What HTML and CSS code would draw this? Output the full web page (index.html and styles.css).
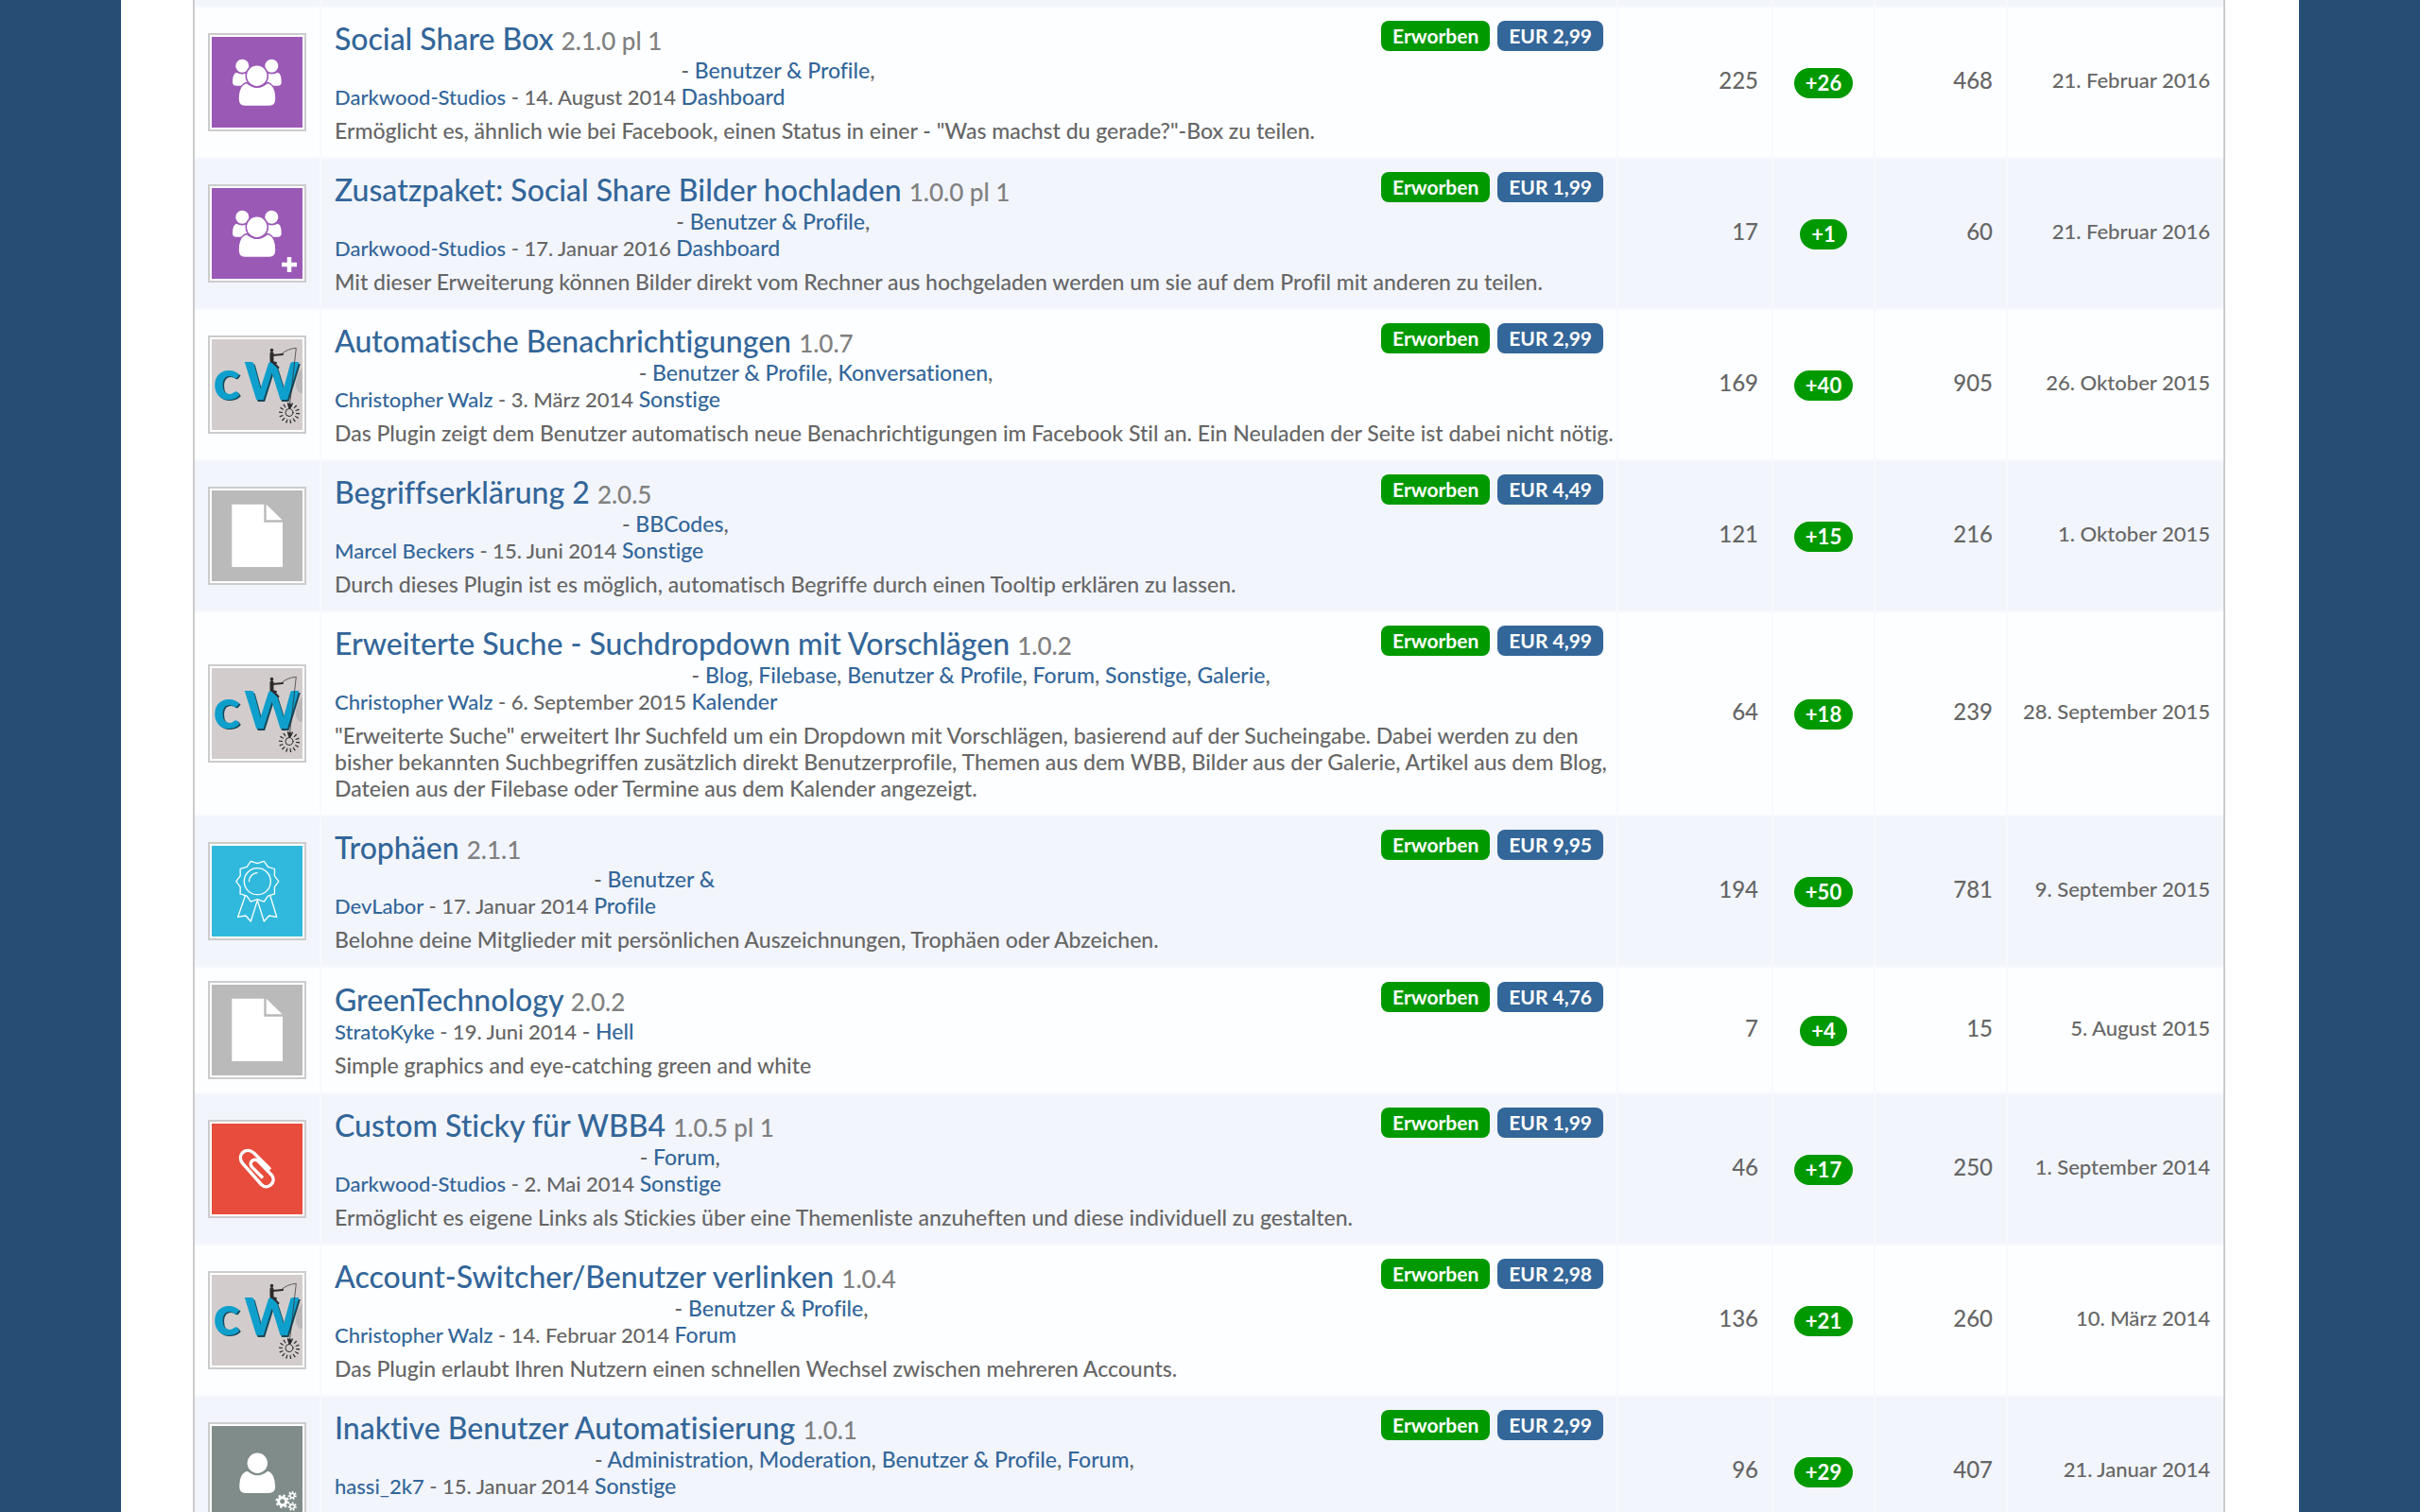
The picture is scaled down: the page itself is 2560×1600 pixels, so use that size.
FILE: index.html
```html
<!DOCTYPE html>
<html lang="de">
<head>
    <meta charset="UTF-8" />
    <meta name="viewport" content="width=device-width, initial-scale=1" />
    <title>Erworbene Plugins</title>
    <link rel="stylesheet" href="styles.css">
</head>
<body>

    <!-- icon set -->
    <svg class="icon-set" aria-hidden="true">
        <symbol id="icon-users" viewBox="0 0 96 96">
            <rect width="96" height="96" fill="#9b59b6" />
            <g fill="#fff">
                <circle cx="32.3" cy="30.7" r="7" />
                <circle cx="63.3" cy="30.7" r="7" />
                <path d="M26 37.7Q32.300 41 38 38V51.700H26Q22 51.700 22 48Q22 39 26 37.700Z" />
                <path d="M70 37.700Q63.300 41 58 38V51.700H70Q73.700 51.700 73.700 48Q73.700 39 70 37.700Z" />
            </g>
            <g fill="#fff" stroke="#9b59b6" stroke-width="1.600">
                <path d="M37 48.500C31 50 28 57 28 65.500Q28 73.500 35 73.500H61Q68 73.500 68 65.500C68 57 65 50 59 48.500Q48 58 37 48.500Z" />
                <circle cx="47.800" cy="41.300" r="11.500" />
            </g>
        </symbol>
        <symbol id="icon-plus" viewBox="0 0 96 96">
            <path d="M82 73V89M74 81H90" stroke="#fff" stroke-width="4.500" />
        </symbol>
        <symbol id="icon-file" viewBox="0 0 96 96">
            <rect width="96" height="96" fill="#bababa" />
            <path d="M21.300 14.700H55.300V33.700H75V81H21.300Z" fill="#fff" />
            <path d="M57.700 14.700L74.500 31.300H57.700Z" fill="#fff" />
        </symbol>
        <symbol id="icon-ribbon" viewBox="0 0 96 96">
            <rect width="96" height="96" fill="#30b9dc" />
            <g fill="none" stroke="#fff" stroke-width="1.300" stroke-linejoin="round" stroke-linecap="round">
                <path d="M70.800 37.700L66.400 43.600L66.500 50.900L59.500 53.100L55.300 59.100L48.300 56.700L41.300 59.100L37.100 53.100L30.100 50.900L30.200 43.600L25.800 37.700L30.200 31.800L30.100 24.500L37.100 22.300L41.300 16.300L48.300 18.700L55.300 16.300L59.500 22.300L66.500 24.500L66.400 31.800Z" />
                <circle cx="48.300" cy="37.700" r="14" />
                <path d="M39.500 37.700A9 9 0 0 1 48 28.700" />
                <path d="M35.300 53.300L27.700 75.300L36 74L41.300 80L48.300 57.700L55.300 80L60.700 74L68.700 75.300L62 53.300" />
            </g>
        </symbol>
        <symbol id="icon-clip" viewBox="0 0 96 96">
            <rect width="96" height="96" fill="#e74c3c" />
            <path d="M62 48.500L44.500 31C36 24 26 33 32.500 42L52.500 64.500C59 71 69 62 63.500 54.500L49 39.500C44 36 39 41 42.500 46L54 57.500" fill="none" stroke="#fff" stroke-width="3.400" />
        </symbol>
        <symbol id="icon-user" viewBox="0 0 96 96">
            <rect width="96" height="96" fill="#7f8c8a" />
            <g fill="#fff" stroke="#7f8c8a" stroke-width="1.600">
                <path d="M38 47C31 48 28.500 56 28.500 64.500Q28.500 71.700 36 71.700H60Q68 71.700 68 64.500C68 56 65 48 59 47Q48.300 56 38 47Z" />
                <circle cx="48.300" cy="39.300" r="11.500" />
            </g>
            <g fill="none" stroke="#fff">
                <circle cx="74.700" cy="79.700" r="4" stroke-width="3" />
                <circle cx="74.700" cy="79.700" r="6" stroke-width="2.500" stroke-dasharray="2.350" />
                <circle cx="85.200" cy="73.500" r="2.300" stroke-width="1.500" />
                <circle cx="85.200" cy="73.500" r="3.700" stroke-width="1.800" stroke-dasharray="1.660" />
                <circle cx="85.200" cy="85.200" r="2.300" stroke-width="1.500" />
                <circle cx="85.200" cy="85.200" r="3.700" stroke-width="1.800" stroke-dasharray="1.660" />
            </g>
        </symbol>
        <symbol id="icon-cw" viewBox="0 0 96 96">
            <rect width="96" height="96" fill="#d2cdcc" />
            <path d="M96 30Q88 38 89 50Q91 58 96 57Z" fill="#bcb8b9" />
            <g font-family="Lato, sans-serif" font-weight="900">
                <g fill="#17485a">
                    <text x="3" y="65" font-size="59">c</text>
                    <text x="36" y="66" font-size="55">W</text>
                </g>
                <g fill="#0f9fcc">
                    <text x="1.500" y="63.500" font-size="59">c</text>
                    <text x="34.500" y="64" font-size="55">W</text>
                </g>
            </g>
            <g fill="none" stroke="#2d2b2c" stroke-linecap="round">
                <circle cx="63.500" cy="11.500" r="1.800" fill="#2d2b2c" stroke="none" />
                <path d="M63.500 15V23" stroke-width="4" />
                <path d="M64 17L75 16M64 24L70.500 30M64 24L68 25" stroke-width="2" />
                <path d="M74 15.500Q80 10 89.300 9.300L82.700 68" stroke-width="0.700" />
                <path d="M82.500 69V72" stroke-width="3" />
                <circle cx="82" cy="77.500" r="4" stroke-width="1" />
                <circle cx="82" cy="78" r="9" stroke-width="4" stroke-linecap="butt" stroke-dasharray="1.200 2.834" />
            </g>
        </symbol>
    </svg>

    <main class="page">
        <table class="plugin-table">
            <colgroup>
                <col class="col-icon" />
                <col class="col-title" />
                <col class="col-purchases" />
                <col class="col-rating" />
                <col class="col-downloads" />
                <col class="col-date" />
            </colgroup>
            <tbody id="plugin-list">
                <tr class="row-tail"><td></td><td></td><td></td><td></td><td></td><td></td></tr>
            </tbody>
        </table>
    </main>

    <script src="plugins.js"></script>

</body>
</html>
```
FILE: styles.css
```css
body {
    margin: 0;
    height: 100vh;
    overflow: hidden;
    background-color: #264d73;
    color: #666;
    font-family: Lato, sans-serif;
    font-size: 23px;
    font-weight: 500;
    font-variant-ligatures: none;
    line-height: 28px;
}
a {
    color: #369;
    text-decoration: none;
}
a:hover {
    text-decoration: underline;
}
.icon-set {
    display: none;
}
.page {
    margin: 0 5%;
    padding: 0 78px 0 76px;
    background-color: #fff;
}
.plugin-table {
    width: 100%;
    table-layout: fixed;
    border-collapse: separate;
    border-spacing: 0;
    border-left: 2px solid #ccc;
    border-right: 2px solid #ccc;
}
.col-icon {
    width: 132px;
}
.col-purchases {
    width: 164px;
}
.col-rating {
    width: 108px;
}
.col-downloads {
    width: 140px;
}
.col-date {
    width: 230px;
}
td {
    padding: 14px;
    border-left: 2px solid #f7f9fe;
    border-bottom: 2px solid #f7f9fe;
    background-color: #fdfeff;
    vertical-align: middle;
}
td:first-child {
    border-left: none;
}
tr:nth-child(odd) td {
    background-color: #f2f5fc;
}
.row-tail td {
    height: 6px;
    padding: 0;
}
.thumb {
    display: block;
    box-sizing: border-box;
    width: 104px;
    height: 104px;
    padding: 2px;
    border: 2px solid #ccc;
    background-color: #fff;
}
td.title {
    padding-right: 0;
}
.title h3 {
    margin: 0;
    font-size: 32px;
    font-weight: 500;
    line-height: 38px;
}
.version {
    color: #808080;
    font-size: 26px;
    line-height: 1;
}
.meta, .description {
    margin: 0;
}
.meta {
    font-size: 22px;
}
.description {
    margin-top: 7px;
}
.categories {
    display: inline-block;
    font-size: 23px;
}
.labels {
    float: right;
    display: flex;
    gap: 8px;
    margin-right: 14px;
}
.label {
    padding: 0 12px;
    border-radius: 8px;
    background-color: #369;
    color: #fff;
    font-size: 21px;
    font-weight: bold;
    line-height: 32px;
}
.label.bought, .rating-badge {
    background-color: #090;
}
.rating {
    text-align: center;
}
.rating-badge {
    display: inline-block;
    padding: 0 12px;
    border-radius: 16px;
    color: #fff;
    font-size: 22px;
    font-weight: bold;
    line-height: 32px;
    vertical-align: middle;
}
.number, .date {
    padding-bottom: 18px;
    text-align: right;
    white-space: nowrap;
}
.number {
    font-size: 24px;
}
.date {
    font-size: 22px;
}
```
FILE: plugins.js
```javascript
// categories: one array per line
const plugins = [
    { icon: 'users', title: 'Social Share Box', version: '2.1.0 pl 1', author: 'Darkwood-Studios', created: '14. August 2014', categories: [['Benutzer & Profile'], ['Dashboard']], text: 'Ermöglicht es, ähnlich wie bei Facebook, einen Status in einer - "Was machst du gerade?"-Box zu teilen.', price: '2,99', purchases: 225, rating: 26, downloads: 468, updated: '21. Februar 2016' },
    { icon: 'users', extra: 'plus', title: 'Zusatzpaket: Social Share Bilder hochladen', version: '1.0.0 pl 1', author: 'Darkwood-Studios', created: '17. Januar 2016', categories: [['Benutzer & Profile'], ['Dashboard']], text: 'Mit dieser Erweiterung können Bilder direkt vom Rechner aus hochgeladen werden um sie auf dem Profil mit anderen zu teilen.', price: '1,99', purchases: 17, rating: 1, downloads: 60, updated: '21. Februar 2016' },
    { icon: 'cw', title: 'Automatische Benachrichtigungen', version: '1.0.7', author: 'Christopher Walz', created: '3. März 2014', categories: [['Benutzer & Profile', 'Konversationen'], ['Sonstige']], text: 'Das Plugin zeigt dem Benutzer automatisch neue Benachrichtigungen im Facebook Stil an. Ein Neuladen der Seite ist dabei nicht nötig.', price: '2,99', purchases: 169, rating: 40, downloads: 905, updated: '26. Oktober 2015' },
    { icon: 'file', title: 'Begriffserklärung 2', version: '2.0.5', author: 'Marcel Beckers', created: '15. Juni 2014', categories: [['BBCodes'], ['Sonstige']], text: 'Durch dieses Plugin ist es möglich, automatisch Begriffe durch einen Tooltip erklären zu lassen.', price: '4,49', purchases: 121, rating: 15, downloads: 216, updated: '1. Oktober 2015' },
    { icon: 'cw', title: 'Erweiterte Suche - Suchdropdown mit Vorschlägen', version: '1.0.2', author: 'Christopher Walz', created: '6. September 2015', categories: [['Blog', 'Filebase', 'Benutzer & Profile', 'Forum', 'Sonstige', 'Galerie'], ['Kalender']], text: '"Erweiterte Suche" erweitert Ihr Suchfeld um ein Dropdown mit Vorschlägen, basierend auf der Sucheingabe. Dabei werden zu den bisher bekannten Suchbegriffen zusätzlich direkt Benutzerprofile, Themen aus dem WBB, Bilder aus der Galerie, Artikel aus dem Blog, Dateien aus der Filebase oder Termine aus dem Kalender angezeigt.', price: '4,99', purchases: 64, rating: 18, downloads: 239, updated: '28. September 2015' },
    { icon: 'ribbon', title: 'Trophäen', version: '2.1.1', author: 'DevLabor', created: '17. Januar 2014', categories: [['Benutzer &<br>Profile']], text: 'Belohne deine Mitglieder mit persönlichen Auszeichnungen, Trophäen oder Abzeichen.', price: '9,95', purchases: 194, rating: 50, downloads: 781, updated: '9. September 2015' },
    { icon: 'file', title: 'GreenTechnology', version: '2.0.2', author: 'StratoKyke', created: '19. Juni 2014', categories: [['Hell']], text: 'Simple graphics and eye-catching green and white', price: '4,76', purchases: 7, rating: 4, downloads: 15, updated: '5. August 2015' },
    { icon: 'clip', title: 'Custom Sticky für WBB4', version: '1.0.5 pl 1', author: 'Darkwood-Studios', created: '2. Mai 2014', categories: [['Forum'], ['Sonstige']], text: 'Ermöglicht es eigene Links als Stickies über eine Themenliste anzuheften und diese individuell zu gestalten.', price: '1,99', purchases: 46, rating: 17, downloads: 250, updated: '1. September 2014' },
    { icon: 'cw', title: 'Account-Switcher/Benutzer verlinken', version: '1.0.4', author: 'Christopher Walz', created: '14. Februar 2014', categories: [['Benutzer & Profile'], ['Forum']], text: 'Das Plugin erlaubt Ihren Nutzern einen schnellen Wechsel zwischen mehreren Accounts.', price: '2,98', purchases: 136, rating: 21, downloads: 260, updated: '10. März 2014' },
    { icon: 'user', title: 'Inaktive Benutzer Automatisierung', version: '1.0.1', author: 'hassi_2k7', created: '15. Januar 2014', categories: [['Administration', 'Moderation', 'Benutzer & Profile', 'Forum'], ['Sonstige']], text: 'Versendet automatisch nach einer bestimmten Zeit der Inaktivität eine E-Mail an Benutzer und löscht diese bei Bedarf.', price: '2,99', purchases: 96, rating: 29, downloads: 407, updated: '21. Januar 2014' }
];

function link(text) {
    return `<a href="#">${text.replace('& ', '&amp; ')}</a>`;
}

const list = document.getElementById('plugin-list');

plugins.forEach(p => {
    const categories = p.categories.map(line => line.map(link).join(', ')).join(',<br>');
    const extra = p.extra ? `<use href="#icon-${p.extra}" />` : '';
    const row = document.createElement('tr');
    row.innerHTML = `
        <td><svg class="thumb" viewBox="0 0 96 96" aria-hidden="true"><use href="#icon-${p.icon}" />${extra}</svg></td>
        <td class="title">
            <div class="labels"><span class="label bought">Erworben</span><span class="label">EUR ${p.price}</span></div>
            <h3>${link(p.title)} <span class="version">${p.version}</span></h3>
            <p class="meta">${link(p.author)} - ${p.created} <span class="categories">- ${categories}</span></p>
            <p class="description">${p.text}</p>
        </td>
        <td class="number">${p.purchases}</td>
        <td class="rating"><span class="rating-badge">+${p.rating}</span></td>
        <td class="number">${p.downloads}</td>
        <td class="date">${p.updated}</td>`;
    list.appendChild(row);
});
```
